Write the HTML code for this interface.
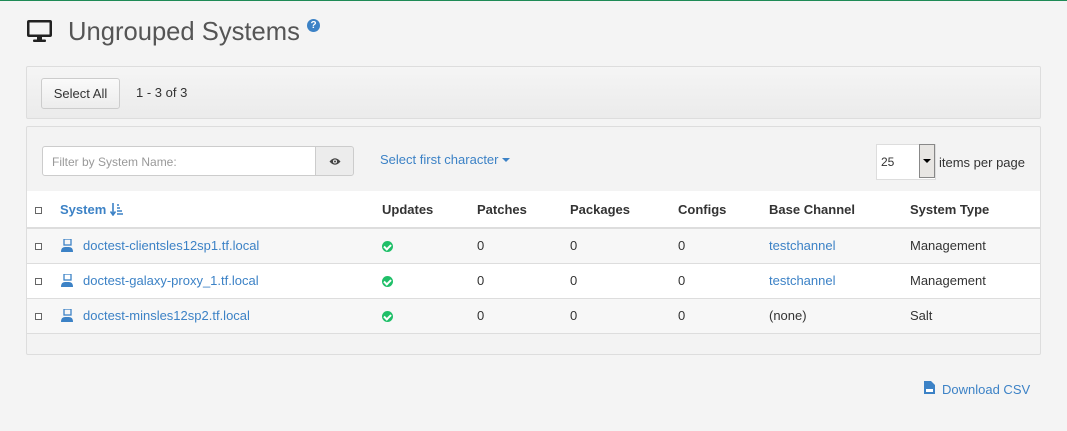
<!DOCTYPE html>
<html><head><meta charset="utf-8"><style>
*{box-sizing:border-box;margin:0;padding:0}
body{width:1067px;height:431px;background:#f4f4f4;font-family:"Liberation Sans",sans-serif;font-size:13px;color:#333;position:relative;overflow:hidden}
.abs{position:absolute}
a{color:#3c82c6;text-decoration:none}
.title{left:68px;top:18px;font-size:25.6px;color:#555;font-weight:normal}
.p1{left:26px;top:66px;width:1015px;height:53px;border:1px solid #ddd;background:linear-gradient(#f5f5f5,#ebebeb);border-radius:2px}
.btn{left:14px;top:11px;width:79px;height:31px;border:1px solid #ccc;border-radius:3px;background:linear-gradient(#fafafa,#ececec);font-size:13px;line-height:29px;text-align:center;color:#333}
.p2{left:26px;top:126px;width:1015px;height:229px;border:1px solid #ddd;background:#f3f3f3;border-radius:2px}
.inp{left:15px;top:19px;width:274px;height:30px;border:1px solid #ccc;border-radius:3px 0 0 3px;background:#fff;color:#999;font-size:12px;padding:8px 9px}
.eye{left:288px;top:19px;width:39px;height:30px;border:1px solid #ccc;border-radius:0 3px 3px 0;background:#ececec}
table{position:absolute;left:0;top:64px;width:1013px;border-collapse:collapse;background:#fff}
th{height:37px;text-align:left;font-weight:bold;border-bottom:2px solid #ddd;font-size:13px;color:#333}
td{height:35px;border-bottom:1px solid #ddd}
tr.a td{background:#f7f7f7}
.cb{display:inline-block;width:7px;height:7px;border:1px solid #666;background:#fff;margin-left:8px;vertical-align:middle}
.ok{display:inline-block;width:11px;height:11px;border-radius:50%;background:#1fbf68;vertical-align:middle;position:relative}
.ok:after{content:"";position:absolute;left:3px;top:2px;width:3px;height:5px;border:solid #fff;border-width:0 2px 2px 0;transform:rotate(45deg)}
.sv{display:inline-block;vertical-align:-2px;margin-right:9px}
</style></head><body>
<div class="abs" style="left:0;top:0;width:1067px;height:1px;background:#1e8a55"></div>
<svg class="abs" style="left:26px;top:19px" width="27" height="24" viewBox="0 0 27 24"><rect x="1" y="1" width="25" height="17" rx="2" fill="#222"/><rect x="3.5" y="3.5" width="20" height="12" fill="#f4f4f4"/><rect x="11" y="18" width="5" height="3" fill="#222"/><rect x="7" y="20.5" width="13" height="2.5" rx="1" fill="#222"/></svg>
<div class="abs title">Ungrouped Systems</div>
<div class="abs" style="left:307px;top:19px;width:13px;height:13px;border-radius:50%;background:#3c82c6;color:#fff;font-size:10px;font-weight:bold;text-align:center;line-height:13px">?</div>
<div class="abs p1"><div class="abs btn">Select All</div><div class="abs" style="left:109px;top:18px">1 - 3 of 3</div></div>
<div class="abs p2">
<div class="abs inp">Filter by System Name:</div>
<div class="abs eye"><svg style="position:absolute;left:13px;top:10px" width="12" height="9" viewBox="0 0 12 9"><path d="M0.5 4.5Q6 -2 11.5 4.5Q6 11 0.5 4.5Z" fill="#444"/><circle cx="6" cy="4.5" r="2" fill="#ececec"/><circle cx="6" cy="4.5" r="1" fill="#444"/></svg></div>
<div class="abs" style="left:353px;top:25px"><a>Select first character</a> <span style="display:inline-block;border:4px solid transparent;border-top-color:#3c82c6;vertical-align:-2px"></span></div>
<div class="abs" style="left:849px;top:17px;width:60px;height:36px;border:1px solid #ddd;background:#fff;padding:10px 4px;font-size:12px">25</div>
<div class="abs" style="left:892px;top:17px;width:16px;height:34px;border:1px solid #888;background:#e8e6e3"><span style="position:absolute;left:3px;top:14px;border:4px solid transparent;border-top-color:#000"></span></div>
<div class="abs" style="left:912px;top:28px">items per page</div>
<table>
<tr><th style="width:33px"><span class="cb"></span></th><th style="width:322px"><a style="font-weight:bold">System</a> <svg style="vertical-align:-2px" width="14" height="13" viewBox="0 0 14 13"><path d="M3 0V11M0.5 8.5L3 12L5.5 8.5" stroke="#3c82c6" stroke-width="1.6" fill="none"/><path d="M7 2H9M7 5H10M7 8H12M7 11H13" stroke="#3c82c6" stroke-width="1.5"/></svg></th><th style="width:95px">Updates</th><th style="width:93px">Patches</th><th style="width:108px">Packages</th><th style="width:91px">Configs</th><th style="width:141px">Base Channel</th><th>System Type</th></tr>
<tr class="a"><td><span class="cb"></span></td><td><svg class="sv" width="14" height="13" viewBox="0 0 14 13"><rect x="4" y="0" width="7" height="6" fill="none" stroke="#3c82c6" stroke-width="1.3"/><path d="M1 13Q1 8 5 8H9Q13 8 13 13Z" fill="#3c82c6"/></svg><a>doctest-clientsles12sp1.tf.local</a></td><td><span class="ok"></span></td><td>0</td><td>0</td><td>0</td><td><a>testchannel</a></td><td>Management</td></tr>
<tr><td><span class="cb"></span></td><td><svg class="sv" width="14" height="13" viewBox="0 0 14 13"><rect x="4" y="0" width="7" height="6" fill="none" stroke="#3c82c6" stroke-width="1.3"/><path d="M1 13Q1 8 5 8H9Q13 8 13 13Z" fill="#3c82c6"/></svg><a>doctest-galaxy-proxy_1.tf.local</a></td><td><span class="ok"></span></td><td>0</td><td>0</td><td>0</td><td><a>testchannel</a></td><td>Management</td></tr>
<tr class="a"><td><span class="cb"></span></td><td><svg class="sv" width="14" height="13" viewBox="0 0 14 13"><rect x="4" y="0" width="7" height="6" fill="none" stroke="#3c82c6" stroke-width="1.3"/><path d="M1 13Q1 8 5 8H9Q13 8 13 13Z" fill="#3c82c6"/></svg><a>doctest-minsles12sp2.tf.local</a></td><td><span class="ok"></span></td><td>0</td><td>0</td><td>0</td><td>(none)</td><td>Salt</td></tr>
</table>
</div>
<svg class="abs" style="left:924px;top:381px" width="11" height="13" viewBox="0 0 11 13"><path d="M0 0H7L11 4V13H0Z" fill="#3c82c6"/><rect x="2" y="8" width="7" height="3" fill="#fff"/></svg>
<div class="abs" style="left:942px;top:382px"><a>Download CSV</a></div>
</body></html>
